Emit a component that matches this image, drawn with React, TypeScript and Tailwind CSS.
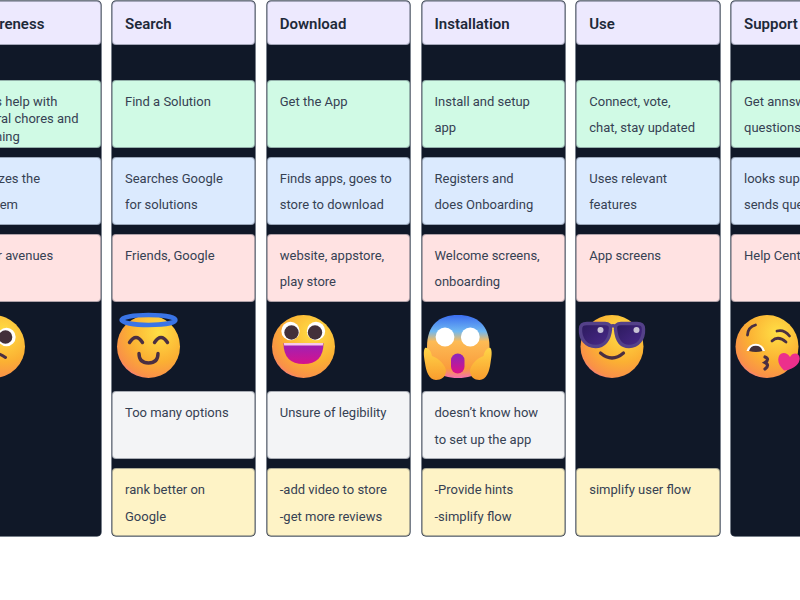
import React from 'react';

const ink = '#4a2f42';

// shared face ball: yellow top right, orange middle, pink at the chin
const FaceDefs = ({ id }: { id: string }) => (
  <defs>
    <radialGradient id={`${id}-face`} cx="0.66" cy="0.28" r="0.85">
      <stop offset="0" stopColor="#ffdf45" />
      <stop offset="0.55" stopColor="#fbb033" />
      <stop offset="0.85" stopColor="#f99048" />
      <stop offset="1" stopColor="#f56fb0" />
    </radialGradient>
    <linearGradient id={`${id}-mouth`} x1="0" y1="0" x2="0" y2="1">
      <stop offset="0" stopColor="#9a22b8" />
      <stop offset="1" stopColor="#d6128c" />
    </linearGradient>
  </defs>
);

const Halo = () => (
  <svg width="72" height="72" viewBox="0 0 72 72">
    <FaceDefs id="halo" />
    <circle cx="36.5" cy="35.5" r="31.5" fill="url(#halo-face)" />
    <ellipse cx="36.5" cy="9" rx="27" ry="5" fill="none" stroke="#3a74e6" strokeWidth="4.4" />
    <g fill="none" stroke={ink} strokeWidth="3.4" strokeLinecap="round">
      <path d="M17.5 31.5 Q24 21.5 30.5 31.5" />
      <path d="M42.5 31.5 Q49 21.5 55.5 31.5" />
      <path d="M27 42.5 Q27 52 36.5 52 Q46 52 46 42.5" />
    </g>
  </svg>
);

const Grin = () => (
  <svg width="72" height="72" viewBox="0 0 72 72">
    <FaceDefs id="grin" />
    <circle cx="36.5" cy="35.5" r="31.5" fill="url(#grin-face)" />
    <circle cx="23.5" cy="20" r="9.2" fill="#fff" />
    <circle cx="49" cy="20" r="9.2" fill="#fff" />
    <circle cx="24.5" cy="21.5" r="7.2" fill="#43303a" />
    <circle cx="48" cy="21.5" r="7.2" fill="#43303a" />
    <path d="M16.5 32 H56.5 Q56.5 53 36.5 53 Q16.5 53 16.5 32 Z" fill="url(#grin-mouth)" />
    <path d="M16.8 32 H56.2 L55.8 34.6 H17.2 Z" fill="#f7c8ea" />
  </svg>
);

const Scream = () => (
  <svg width="72" height="72" viewBox="0 0 72 72">
    <defs>
      <linearGradient id="scream-face" x1="0" y1="0" x2="0" y2="1">
        <stop offset="0" stopColor="#3b6df0" />
        <stop offset="0.26" stopColor="#6fb8f2" />
        <stop offset="0.42" stopColor="#fdbb55" />
        <stop offset="0.85" stopColor="#fa9c3c" />
        <stop offset="1" stopColor="#f56fb0" />
      </linearGradient>
      <linearGradient id="scream-hand" x1="0" y1="0" x2="0" y2="1">
        <stop offset="0" stopColor="#ffd548" />
        <stop offset="1" stopColor="#f99c2e" />
      </linearGradient>
      <linearGradient id="scream-mouth" x1="0" y1="0" x2="0" y2="1">
        <stop offset="0" stopColor="#8a26bc" />
        <stop offset="1" stopColor="#de1184" />
      </linearGradient>
    </defs>
    <path d="M5 36 C5 14 17 4 36 4 C55 4 67.5 14 67.5 36 C67.5 58 55 67 36 67 C17 67 5 58 5 36 Z" fill="url(#scream-face)" />
    <circle cx="23" cy="26" r="9.4" fill="#fff" />
    <circle cx="48.3" cy="26" r="9.4" fill="#fff" />
    <rect x="29" y="42.5" width="13.5" height="20" rx="6.7" fill="url(#scream-mouth)" />
    <path d="M3 37 C6 36 9 40 10 45 C16 47 24 54 24 60 C24 66 19 69 14 69 C7 69 4 60 3 52 C2 46 1 40 3 37 Z" fill="url(#scream-hand)" />
    <path d="M68.5 37 C65.5 36 62.5 40 61.5 45 C55.5 47 48 54 48 60 C48 66 52.5 69 57.5 69 C64.5 69 67.5 60 68.5 52 C69.5 46 70.5 40 68.5 37 Z" fill="url(#scream-hand)" />
  </svg>
);

const Shades = () => (
  <svg width="72" height="72" viewBox="0 0 72 72">
    <defs>
      <radialGradient id="shades-face" cx="0.66" cy="0.28" r="0.85">
        <stop offset="0" stopColor="#ffdf45" />
        <stop offset="0.55" stopColor="#fbb033" />
        <stop offset="0.85" stopColor="#f99048" />
        <stop offset="1" stopColor="#f56fb0" />
      </radialGradient>
      <linearGradient id="shades-lens" x1="0" y1="0" x2="1" y2="1">
        <stop offset="0" stopColor="#2b1a5c" />
        <stop offset="1" stopColor="#4b2a8c" />
      </linearGradient>
    </defs>
    <circle cx="36" cy="35.5" r="31.5" fill="url(#shades-face)" />
    <g fill="url(#shades-lens)" stroke="#544189" strokeWidth="3.4" strokeLinejoin="round">
      <path d="M4.5 18 C4.5 13.5 7 12.5 11 12.5 H29 Q35 12.5 34.5 18 C33.5 29 28 35.5 19.5 35.5 C10 35.5 4 28 4.5 18 Z" />
      <path d="M67.5 18 C67.5 13.5 65 12.5 61 12.5 H45 Q39 12.5 39.5 18 C40.5 29 45 35.5 53 35.5 C62 35.5 68 28 67.5 18 Z" />
    </g>
    <path d="M34 15.5 Q37 14 40 15.5" fill="none" stroke="#544189" strokeWidth="3.4" />
    <circle cx="24.5" cy="19" r="3" fill="#c9c3d6" />
    <circle cx="60.5" cy="19" r="3" fill="#c9c3d6" />
    <path d="M24.5 42 Q36 52 47.5 42" fill="none" stroke={ink} strokeWidth="3.2" strokeLinecap="round" />
  </svg>
);

const Kiss = () => (
  <svg width="72" height="72" viewBox="0 0 72 72">
    <FaceDefs id="kiss" />
    <circle cx="36" cy="35.5" r="31.5" fill="url(#kiss-face)" />
    <path d="M15.5 40 A9.5 9.5 0 0 1 34 40 Z" fill="#fff" />
    <path d="M18 40 A7 7 0 0 1 31.5 40 Q25 42 18 40 Z" fill="#43303a" />
    <g fill="none" stroke={ink} strokeWidth="2.8" strokeLinecap="round">
      <path d="M16.5 24 Q17 16 24.5 14" />
      <path d="M41 30 Q47 24 55 31" />
      <path d="M46 20 Q53 18 58.5 25" />
      <path d="M34 46 Q39 48 34 51.5 Q39 54 34 58" strokeWidth="3.2" />
    </g>
    <path d="M59 46 C62 40 70 42 68.5 49 C67.5 55 60 59 53 59.5 C48 55 46 50 48 45 C50 41 56 41 59 46 Z" fill="#ec2f8c" />
  </svg>
);

const Worried = () => (
  <svg width="72" height="72" viewBox="0 0 72 72">
    <FaceDefs id="worried" />
    <circle cx="36.5" cy="35.5" r="31.5" fill="url(#worried-face)" />
    <circle cx="22" cy="26" r="9" fill="#fff" />
    <circle cx="22" cy="26" r="7" fill="#43303a" />
    <circle cx="49.5" cy="26" r="9.2" fill="#fff" />
    <circle cx="48.5" cy="26" r="6.8" fill="#43303a" />
    <path d="M28 44 Q38 39 48.5 46.5" fill="none" stroke={ink} strokeWidth="3" strokeLinecap="round" />
  </svg>
);

type Column = {
  title: string;
  goal: string[];
  action: string[];
  touch: string[];
  emoji: React.ReactNode;
  pain?: string[];
  idea?: string[];
  tight?: boolean;
};

const columns: Column[] = [
  {
    title: 'Awareness',
    goal: ['Tools help with', 'several chores and', 'planning'],
    action: ['Realizes the', 'problem'],
    touch: ['Other avenues'],
    emoji: <Worried />,
    tight: true,
  },
  {
    title: 'Search',
    goal: ['Find a Solution'],
    action: ['Searches Google', 'for solutions'],
    touch: ['Friends, Google'],
    emoji: <Halo />,
    pain: ['Too many options'],
    idea: ['rank better on', 'Google'],
  },
  {
    title: 'Download',
    goal: ['Get the App'],
    action: ['Finds apps, goes to', 'store to download'],
    touch: ['website, appstore,', 'play store'],
    emoji: <Grin />,
    pain: ['Unsure of legibility'],
    idea: ['-add video to store', '-get more reviews'],
  },
  {
    title: 'Installation',
    goal: ['Install and setup', 'app'],
    action: ['Registers and', 'does Onboarding'],
    touch: ['Welcome screens,', 'onboarding'],
    emoji: <Scream />,
    pain: ['doesn’t know how', 'to set up the app'],
    idea: ['-Provide hints', '-simplify flow'],
  },
  {
    title: 'Use',
    goal: ['Connect, vote,', 'chat, stay updated'],
    action: ['Uses relevant', 'features'],
    touch: ['App screens'],
    emoji: <Shades />,
    idea: ['simplify user flow'],
  },
  {
    title: 'Support',
    goal: ['Get annswers to', 'questions'],
    action: ['looks support', 'sends queries'],
    touch: ['Help Center'],
    emoji: <Kiss />,
  },
];

const Card = ({ lines, color, tight }: { lines: string[]; color: string; tight?: boolean }) => (
  <div className={`h-[68px] mb-[9px] shrink-0 px-3 rounded border border-gray-700/40 text-[13px] text-gray-700 whitespace-nowrap ${color} ${tight ? 'leading-[17.5px] pt-[12px]' : 'leading-[26.6px] pt-[8px]'}`}>
    {lines.map((line) => (
      <div key={line}>{line}</div>
    ))}
  </div>
);

export default function App() {
  return (
    <div className="w-[800px] h-[600px] overflow-hidden bg-white pt-px font-['Roboto',sans-serif]">
      <div className="flex gap-[11.5px] ml-[-42.75px] w-[1000px]">
        {columns.map((col) => (
          <div key={col.title} className="w-[143.25px] h-[535px] shrink-0 flex flex-col bg-gray-900 rounded overflow-hidden shadow-[0_0_0_0.75px_#4b5563]">
            <div className="h-[44px] mb-[34.5px] shrink-0 px-3 pt-[2px] flex items-center rounded border border-gray-700/40 bg-violet-100 text-[15px] font-semibold text-gray-800 whitespace-nowrap">
              {col.title}
            </div>
            <Card lines={col.goal} color="bg-emerald-100" tight={col.tight} />
            <Card lines={col.action} color="bg-blue-100" />
            <Card lines={col.touch} color="bg-red-100" />
            <div className="h-[80.5px] shrink-0">{col.emoji}</div>
            {col.pain ? <Card lines={col.pain} color="bg-gray-100" /> : <div className="h-[77px] shrink-0" />}
            {col.idea && <Card lines={col.idea} color="bg-amber-100" />}
          </div>
        ))}
      </div>
    </div>
  );
}
